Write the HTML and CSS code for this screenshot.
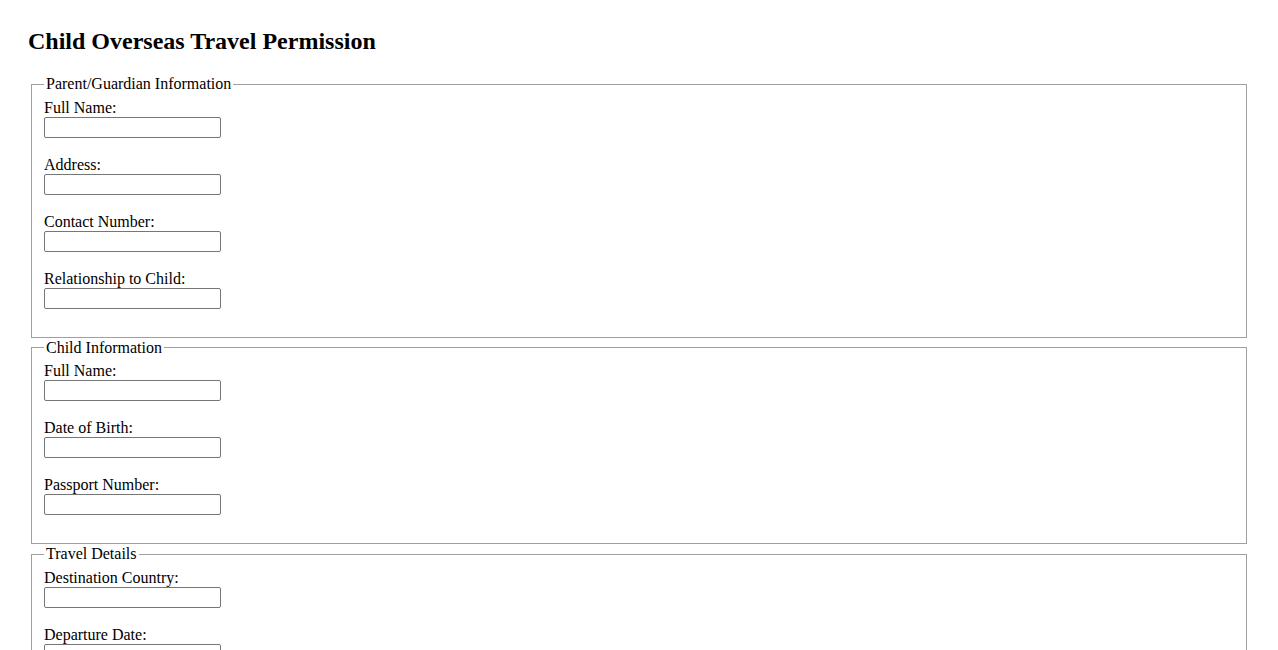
FILE: index.html
```html
<!DOCTYPE html>
<html>
<head>
<meta charset="utf-8">
<title>Child Overseas Travel Permission</title>
<link rel="stylesheet" href="styles.css">
</head>
<body class="page">
<h2 class="title">Child Overseas Travel Permission</h2>
<form class="form">
  <fieldset class="group">
    <legend class="legend">Parent/Guardian Information</legend>
    <label class="label" for="p-name">Full Name:</label><br>
    <input class="input" type="text" id="p-name"><br><br>
    <label class="label" for="p-address">Address:</label><br>
    <input class="input" type="text" id="p-address"><br><br>
    <label class="label" for="p-contact">Contact Number:</label><br>
    <input class="input" type="text" id="p-contact"><br><br>
    <label class="label" for="p-rel">Relationship to Child:</label><br>
    <input class="input" type="text" id="p-rel"><br><br>
  </fieldset>
  <fieldset class="group">
    <legend class="legend">Child Information</legend>
    <label class="label" for="c-name">Full Name:</label><br>
    <input class="input" type="text" id="c-name"><br><br>
    <label class="label" for="c-dob">Date of Birth:</label><br>
    <input class="input" type="text" id="c-dob"><br><br>
    <label class="label" for="c-passport">Passport Number:</label><br>
    <input class="input" type="text" id="c-passport"><br><br>
  </fieldset>
  <fieldset class="group">
    <legend class="legend">Travel Details</legend>
    <label class="label" for="t-country">Destination Country:</label><br>
    <input class="input" type="text" id="t-country"><br><br>
    <label class="label" for="t-depart">Departure Date:</label><br>
    <input class="input" type="text" id="t-depart"><br><br>
    <label class="label" for="t-return">Return Date:</label><br>
    <input class="input" type="text" id="t-return"><br><br>
  </fieldset>
</form>
</body>
</html>
```

FILE: styles.css
```css
.page {
  margin: 8px;
  padding: 20px;
  font-family: "Liberation Serif", "Times New Roman", serif;
  font-size: 16px;
  color: #000;
  background: #fff;
}
.title {
  font-size: 24px;
  font-weight: bold;
  margin: 0 0 20px 0;
}
.group {
  margin: 0 3px 1px 3px;
  border: 1px solid #a0a0a0;
}
.input {
  width: 177px;
  height: 21px;
  box-sizing: border-box;
  border: 1px solid #767676;
  border-radius: 2px;
  padding: 1px 2px;
  font-family: Arial, "Liberation Sans", sans-serif;
  font-size: 13.33px;
}
```
